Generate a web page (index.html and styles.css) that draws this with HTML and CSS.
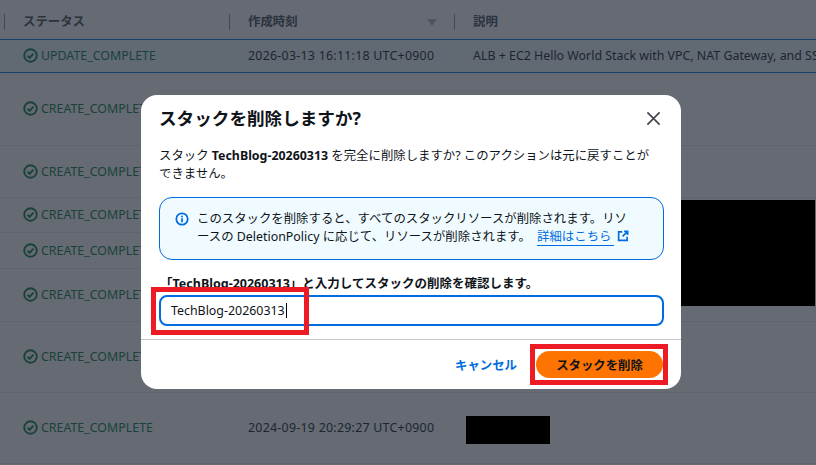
FILE: index.html
```html
<!DOCTYPE html>
<html lang="ja">
<head>
    <meta charset="UTF-8">
    <meta name="viewport" content="width=device-width, initial-scale=1.0">
    <title>スタックを削除</title>
    <link rel="stylesheet" href="styles.css">
</head>
<body>

<!-- Stack list behind the dialog -->
<table class="stack-table">
    <thead>
        <tr>
            <th><span class="th-label">ステータス</span></th>
            <th><span class="th-label">作成時刻</span><span class="sort-caret"></span></th>
            <th><span class="th-label">説明</span></th>
        </tr>
    </thead>
    <tbody>
        <tr class="row-selected">
            <td><span class="status"><svg class="status-icon" viewBox="0 0 16 16"><circle cx="8" cy="8" r="6.7"/><path d="M4.9 8.3l2.2 2.2 4-4.6"/></svg>UPDATE_COMPLETE</span></td>
            <td class="time-cell">2026-03-13 16:11:18 UTC+0900</td>
            <td>ALB + EC2 Hello World Stack with VPC, NAT Gateway, and SS</td>
        </tr>
        <tr class="row-73">
            <td><span class="status"><svg class="status-icon" viewBox="0 0 16 16"><circle cx="8" cy="8" r="6.7"/><path d="M4.9 8.3l2.2 2.2 4-4.6"/></svg>CREATE_COMPLETE</span></td>
            <td></td><td></td>
        </tr>
        <tr class="row-52">
            <td><span class="status"><svg class="status-icon" viewBox="0 0 16 16"><circle cx="8" cy="8" r="6.7"/><path d="M4.9 8.3l2.2 2.2 4-4.6"/></svg>CREATE_COMPLETE</span></td>
            <td></td><td></td>
        </tr>
        <tr class="row-35">
            <td><span class="status"><svg class="status-icon" viewBox="0 0 16 16"><circle cx="8" cy="8" r="6.7"/><path d="M4.9 8.3l2.2 2.2 4-4.6"/></svg>CREATE_COMPLETE</span></td>
            <td></td><td></td>
        </tr>
        <tr class="row-36">
            <td><span class="status"><svg class="status-icon" viewBox="0 0 16 16"><circle cx="8" cy="8" r="6.7"/><path d="M4.9 8.3l2.2 2.2 4-4.6"/></svg>CREATE_COMPLETE</span></td>
            <td></td><td></td>
        </tr>
        <tr class="row-53">
            <td><span class="status"><svg class="status-icon" viewBox="0 0 16 16"><circle cx="8" cy="8" r="6.7"/><path d="M4.9 8.3l2.2 2.2 4-4.6"/></svg>CREATE_COMPLETE</span></td>
            <td></td><td></td>
        </tr>
        <tr class="row-71">
            <td><span class="status"><svg class="status-icon" viewBox="0 0 16 16"><circle cx="8" cy="8" r="6.7"/><path d="M4.9 8.3l2.2 2.2 4-4.6"/></svg>CREATE_COMPLETE</span></td>
            <td></td><td></td>
        </tr>
        <tr class="row-71">
            <td><span class="status"><svg class="status-icon" viewBox="0 0 16 16"><circle cx="8" cy="8" r="6.7"/><path d="M4.9 8.3l2.2 2.2 4-4.6"/></svg>CREATE_COMPLETE</span></td>
            <td class="time-cell">2024-09-19 20:29:27 UTC+0900</td>
            <td></td>
        </tr>
    </tbody>
</table>

<div class="overlay">
    <div class="modal">
        <div class="modal-head">
            <h2>スタックを削除しますか?</h2>
            <svg class="close-icon" viewBox="0 0 16 16"><path d="M1.5 1.5l13 13M14.5 1.5l-13 13"/></svg>
        </div>
        <div class="modal-body">
            <p class="confirm-text">スタック <b>TechBlog-20260313</b> を完全に削除しますか? このアクションは元に戻すことができません。</p>
            <div class="alert">
                <svg class="alert-icon" viewBox="0 0 16 16"><circle cx="8" cy="8" r="6.5"/><path d="M8 7v4.6M8 4.2v1.8"/></svg>
                <p>このスタックを削除すると、すべてのスタックリソースが削除されます。リソースの DeletionPolicy に応じて、リソースが削除されます。 <a class="ext-link" href="#">詳細はこちら</a><svg class="ext-icon" viewBox="0 0 16 16"><path d="M7 2.5H2.2v11.3h11.3V9M9.5 1.8h4.7v4.7M14 2L7.5 8.5"/></svg></p>
            </div>
            <label class="field-label" for="stackName">「TechBlog-20260313」と入力してスタックの削除を確認します。</label>
            <div class="text-input" id="stackName">TechBlog-20260313<span class="caret"></span></div>
        </div>
        <div class="modal-foot">
            <a class="btn-cancel" href="#">キャンセル</a>
            <button class="btn-delete">スタックを削除</button>
        </div>
    </div>
</div>

<!-- Redactions and red highlights drawn over the screenshot -->
<div class="redact redact-big"></div>
<div class="redact redact-small"></div>
<div class="highlight highlight-input"></div>
<div class="highlight highlight-button"></div>

</body>
</html>
```

FILE: styles.css
```css
html, body {
    margin: 0;
    padding: 0;
    height: 465px;
    overflow: hidden;
}

body {
    position: relative;
    background: #fff;
    color: #0f141a;
    font-family: "Noto Sans", "Noto Sans CJK JP", sans-serif;
    font-size: 12.4px;
}

/* Table behind the dialog */
.stack-table {
    width: 816px;
    table-layout: fixed;
    border-collapse: collapse;
}

.stack-table th,
.stack-table td {
    padding: 0 0 0 23px;
    text-align: left;
    white-space: nowrap;
    overflow: hidden;
    border-bottom: 1px solid #e8e8ec;
}

.stack-table th:nth-child(1),
.stack-table td:nth-child(1) {
    width: 225px;
}

.stack-table th:nth-child(2),
.stack-table td:nth-child(2) {
    width: 225px;
}

.stack-table th {
    height: 39px;
    padding-top: 3px;
    box-sizing: border-box;
    color: #424650;
    font-weight: 700;
    position: relative;
    border-bottom: none;
}

.stack-table th::before {
    content: "";
    position: absolute;
    left: 4px;
    top: 14px;
    height: 16px;
    border-left: 1px solid #8c8c94;
}

.sort-caret {
    position: absolute;
    right: 13px;
    top: 19px;
    border-left: 5px solid transparent;
    border-right: 5px solid transparent;
    border-top: 7px solid #b4b4bb;
}

.row-selected td {
    height: 32px;
    background: #f0fbff;
    border-top: 1px solid #0073e6;
    border-bottom: 1px solid #0073e6;
}

.row-73 td { height: 72px; }
.row-52 td { height: 51px; }
.row-35 td { height: 34px; }
.row-36 td { height: 35px; }
.row-53 td { height: 52px; }
.row-71 td { height: 70px; }

.time-cell {
    letter-spacing: 0.25px;
}

.status {
    display: flex;
    align-items: center;
    gap: 3px;
    color: #007a40;
}

.status-icon {
    width: 15px;
    height: 15px;
    fill: none;
    stroke: #007a40;
    stroke-width: 2;
}

.overlay {
    position: absolute;
    top: 0;
    left: 0;
    right: 0;
    bottom: 0;
    padding: 95px 0 0 141px;
    background: rgba(35, 43, 55, 0.7);
}

/* Dialog */
.modal {
    width: 540px;
    height: 294px;
    box-sizing: border-box;
    background: #fff;
    border-radius: 16px;
    display: flex;
    flex-direction: column;
}

.modal-head {
    display: flex;
    justify-content: space-between;
    align-items: center;
    padding: 11px 20px 0 18px;
}

.modal-head h2 {
    margin: 0;
    font-size: 17.6px;
    font-weight: 700;
    line-height: 24px;
}

.close-icon {
    width: 15px;
    height: 15px;
    fill: none;
    stroke: #424650;
    stroke-width: 1.8;
}

.modal-body {
    flex: 1;
    padding: 0 17px 0 18px;
    border-bottom: 1px solid #c6c6cd;
}

.confirm-text {
    margin: 17px 9px 0 0;
    line-height: 17.5px;
}

.alert {
    display: flex;
    gap: 8px;
    height: 63px;
    box-sizing: border-box;
    margin-top: 15px;
    padding: 12px 30px 0 15px;
    background: #f0fbff;
    border: 1px solid #006ce0;
    border-radius: 13px;
}

.alert p {
    margin: 0;
    line-height: 17.5px;
}

.alert-icon {
    flex: none;
    width: 14px;
    height: 14px;
    margin-top: 2px;
    fill: none;
    stroke: #006ce0;
    stroke-width: 2;
}

.ext-link {
    margin-left: 3px;
    padding: 0 3px 0 0;
    color: #006ce0;
    text-decoration: none;
    border-bottom: 1px solid #006ce0;
}

.ext-icon {
    width: 12px;
    height: 12px;
    margin-left: 3px;
    vertical-align: -1px;
    fill: none;
    stroke: #006ce0;
    stroke-width: 2.2;
}

.field-label {
    display: block;
    margin: 15px 0 3px 1px;
    font-size: 12.5px;
    font-weight: 700;
    line-height: 17px;
}

.text-input {
    height: 31px;
    box-sizing: border-box;
    padding-left: 10px;
    line-height: 27px;
    border: 2px solid #006ce0;
    border-radius: 8px;
    color: #0f141a;
}

.caret {
    display: inline-block;
    width: 1px;
    height: 15px;
    margin-left: 1px;
    vertical-align: -3px;
    background: #000;
}

.modal-foot {
    display: flex;
    justify-content: flex-end;
    align-items: center;
    gap: 19px;
    height: 49px;
    padding: 0 18px 0 0;
}

.btn-cancel {
    color: #006ce0;
    font-weight: 700;
    text-decoration: none;
}

.btn-delete {
    width: 127px;
    height: 27px;
    padding: 0;
    background: #ff7300;
    color: #0f141a;
    font: inherit;
    font-weight: 700;
    border: none;
    border-radius: 14px;
}

/* Annotations on top of the screenshot */
.redact {
    position: absolute;
    background: #000;
}

.redact-big {
    left: 681px;
    top: 200px;
    width: 134px;
    height: 106px;
}

.redact-small {
    left: 466px;
    top: 416px;
    width: 84px;
    height: 28px;
}

.highlight {
    position: absolute;
    box-sizing: border-box;
    border: 5px solid #ed1c24;
}

.highlight-input {
    left: 151px;
    top: 287px;
    width: 158px;
    height: 48px;
}

.highlight-button {
    left: 530px;
    top: 344px;
    width: 138px;
    height: 41px;
}
```
